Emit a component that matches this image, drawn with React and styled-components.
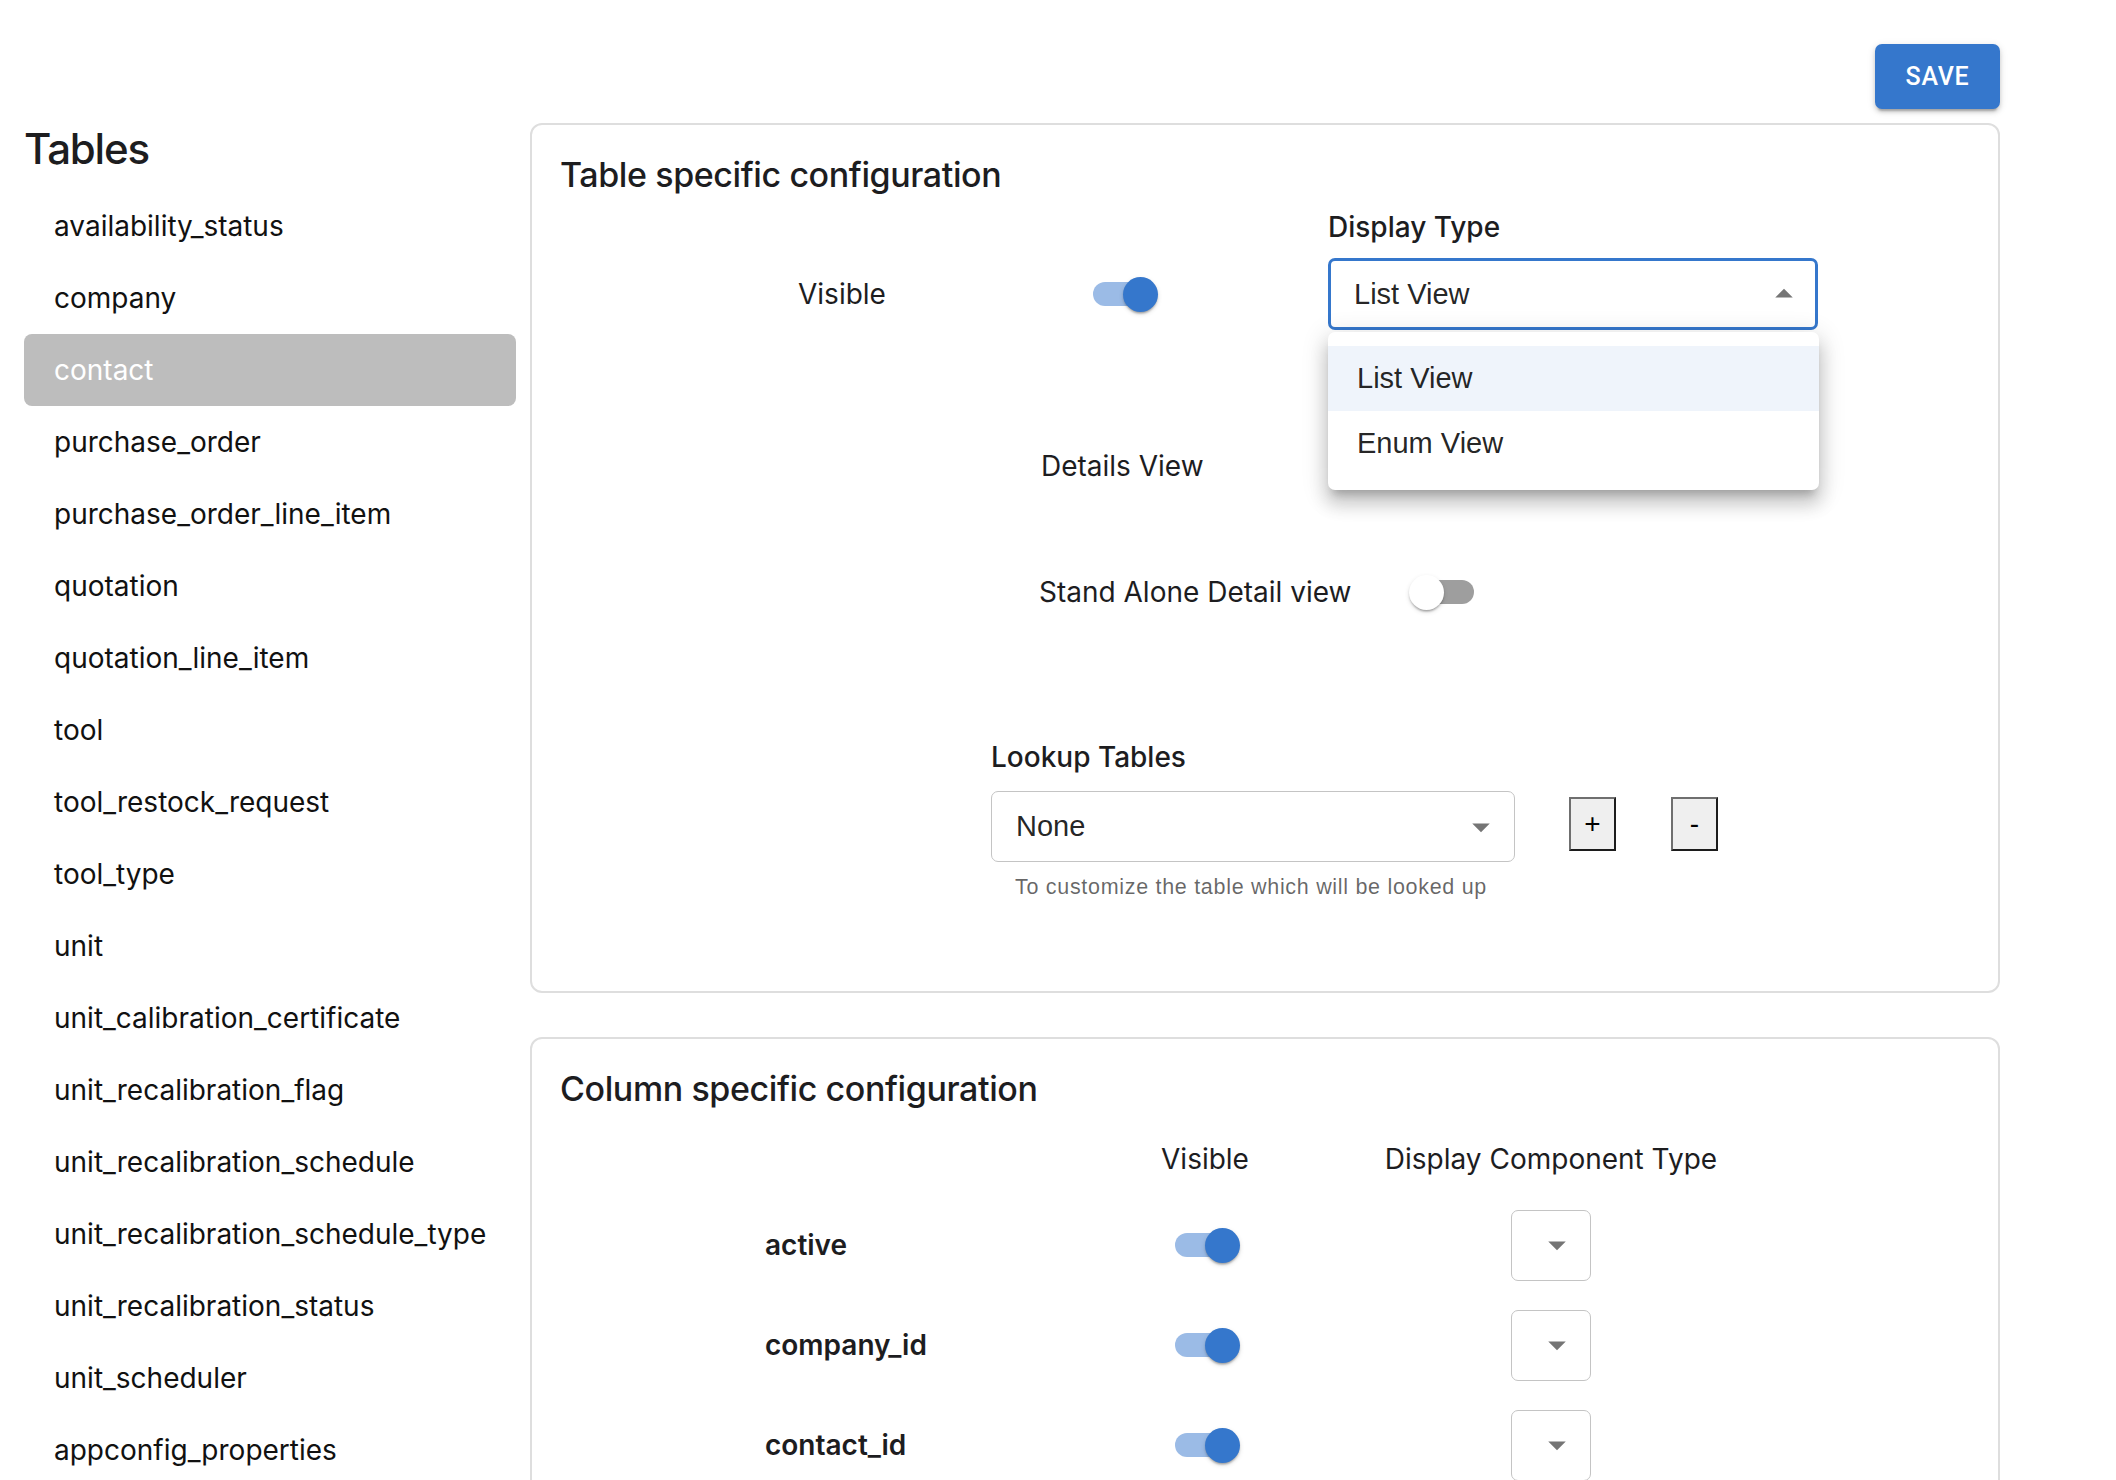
import React from 'react';
import styled, { createGlobalStyle } from 'styled-components';

const SYS = `Inter, "Noto Sans", sans-serif`;
const MUI = `"Liberation Sans", Arial, sans-serif`;
const PRIMARY = '#3577cc';

const GlobalStyle = createGlobalStyle`
  html, body {
    margin: 0;
    padding: 0;
    background: #ffffff;
  }
  body {
    font-family: ${SYS};
    color: #1d1d1f;
  }
`;

const Page = styled.div`
  display: grid;
  grid-template-columns: 492px 1470px;
  column-gap: 14px;
  padding-left: 24px;
  min-height: 1480px;
  box-sizing: border-box;
`;

const Sidebar = styled.aside`
  display: flex;
  flex-direction: column;
  padding-top: 124px;
`;

const SidebarTitle = styled.h2`
  margin: 0 0 16px;
  font-family: ${SYS};
  font-size: 42px;
  font-weight: 500;
  line-height: 1.2;
  letter-spacing: -1.2px;
  color: #1d1d1f;
`;

const TableList = styled.ul`
  list-style: none;
  margin: 0;
  padding: 0;
`;

const TableItem = styled.li`
  display: flex;
  align-items: center;
  height: 72px;
  padding-left: 30px;
  border-radius: 8px;
  font-size: 28px;
  color: ${p => (p.$selected ? '#ffffff' : '#111111')};
  background: ${p => (p.$selected ? '#bdbdbd' : 'transparent')};
`;

const Main = styled.main`
  display: flex;
  flex-direction: column;
`;

const SaveBar = styled.div`
  display: flex;
  justify-content: flex-end;
  padding-top: 44px;
  margin-bottom: 14px;
`;

const SaveButton = styled.button`
  width: 125px;
  height: 65px;
  border: none;
  border-radius: 7px;
  background: ${PRIMARY};
  color: #ffffff;
  font-family: Roboto, ${MUI};
  font-size: 25px;
  font-weight: 500;
  letter-spacing: 0.7px;
  box-shadow: 0 5px 2px -3px rgba(0, 0, 0, 0.2), 0 3px 4px 0 rgba(0, 0, 0, 0.14),
    0 2px 9px 0 rgba(0, 0, 0, 0.12);
`;

const Card = styled.section`
  border: 2px solid #dedede;
  border-radius: 12px;
  padding: 29px 28px ${p => p.$bottom}px;
  margin-bottom: 44px;
`;

const CardTitle = styled.h3`
  margin: 0;
  font-family: ${SYS};
  font-size: 34px;
  font-weight: 500;
  line-height: 42px;
  letter-spacing: -0.4px;
  color: #1d1d1f;
`;

const FieldRow = styled.div`
  display: flex;
  align-items: ${p => (p.$alignEnd ? 'flex-end' : 'center')};
  padding-left: ${p => p.$indent}px;
  margin-top: ${p => p.$top}px;
  min-height: 72px;
`;

const InlineGroup = styled.div`
  display: flex;
  align-items: center;
  height: 72px;
`;

const FieldLabel = styled.span`
  display: inline-block;
  width: ${p => p.$width}px;
  font-size: 28px;
  line-height: 34px;
  color: #1d1d1f;
`;

const FieldColumn = styled.div`
  position: relative;
  display: flex;
  flex-direction: column;
  margin-left: ${p => p.$gap || 0}px;
`;

const ColumnLabel = styled.span`
  font-size: 28px;
  font-weight: 500;
  line-height: 34px;
  margin-bottom: ${p => p.$space}px;
  color: #1d1d1f;
`;

const SelectBox = styled.div`
  position: relative;
  box-sizing: border-box;
  display: flex;
  align-items: center;
  width: ${p => p.$width}px;
  height: ${p => p.$height}px;
  padding-left: ${p => (p.$focused ? 23 : 24)}px;
  border: ${p => (p.$focused ? `3.5px solid ${PRIMARY}` : '1.75px solid #c4c4c4')};
  border-radius: 7px;
  background: #ffffff;
  font-family: ${MUI};
  font-size: 29px;
  color: rgba(0, 0, 0, 0.87);
`;

const SelectIcon = styled.svg`
  position: absolute;
  right: ${p => (p.$focused ? 10 : 12)}px;
  top: 50%;
  width: 42px;
  height: 42px;
  margin-top: -21px;
  fill: #757575;
  transform: ${p => (p.$open ? 'rotate(180deg)' : 'none')};
`;

const Menu = styled.ul`
  position: absolute;
  top: calc(100% + 2px);
  left: 0;
  z-index: 10;
  width: 491px;
  margin: 0;
  padding: 14px 0;
  list-style: none;
  background: #ffffff;
  border-radius: 7px;
  box-shadow: 0 9px 9px -5px rgba(0, 0, 0, 0.2), 0 14px 17px 2px rgba(0, 0, 0, 0.14),
    0 5px 24px 4px rgba(0, 0, 0, 0.12);
`;

const MenuItem = styled.li`
  display: flex;
  align-items: center;
  height: 65px;
  padding-left: 29px;
  font-family: ${MUI};
  font-size: 29px;
  color: rgba(0, 0, 0, 0.87);
  background: ${p => (p.$active ? 'rgba(53, 119, 204, 0.08)' : 'transparent')};
`;

const SwitchRoot = styled.span`
  position: relative;
  display: inline-block;
  width: 70px;
  height: 35px;
  flex-shrink: 0;
`;

const SwitchTrack = styled.span`
  display: block;
  margin: 5.25px;
  height: 24.5px;
  border-radius: 12.25px;
  background: ${p => (p.$on ? '#9bbbe6' : '#9e9e9e')};
`;

const SwitchThumb = styled.span`
  position: absolute;
  top: 0;
  left: ${p => (p.$on ? 35 : 0)}px;
  width: 35px;
  height: 35px;
  border-radius: 50%;
  background: ${p => (p.$on ? PRIMARY : '#ffffff')};
  box-shadow: 0 3px 2px -2px rgba(0, 0, 0, 0.2), 0 2px 2px 0 rgba(0, 0, 0, 0.14),
    0 2px 5px 0 rgba(0, 0, 0, 0.12);
`;

const LookupLine = styled.div`
  display: flex;
  align-items: center;
`;

const StepButton = styled.button`
  width: 47px;
  height: 54px;
  margin-left: ${p => p.$gap}px;
  margin-bottom: 6px;
  padding: 0;
  background: #efefef;
  border-style: solid;
  border-width: 2px;
  border-color: #6f6f6f #1c1c1c #1c1c1c #6f6f6f;
  font-family: ${MUI};
  font-size: 28px;
  color: #000000;
`;

const HelperText = styled.p`
  margin: 14px 0 0 24px;
  font-family: ${MUI};
  font-size: 21.5px;
  line-height: 22px;
  letter-spacing: 0.7px;
  color: rgba(0, 0, 0, 0.6);
`;

const ColumnGrid = styled.div`
  display: grid;
  grid-template-columns: 385px 110px 582px;
  grid-template-rows: 72px;
  grid-auto-rows: 100px;
  padding-left: 205px;
  margin-top: 13px;
  align-items: center;
  justify-items: center;
`;

const HeaderCell = styled.div`
  font-size: 28px;
  color: #1d1d1f;
`;

const ColumnName = styled.div`
  justify-self: start;
  font-size: 28px;
  font-weight: 600;
  color: #1d1d1f;
`;

const tables = [
  'availability_status',
  'company',
  'contact',
  'purchase_order',
  'purchase_order_line_item',
  'quotation',
  'quotation_line_item',
  'tool',
  'tool_restock_request',
  'tool_type',
  'unit',
  'unit_calibration_certificate',
  'unit_recalibration_flag',
  'unit_recalibration_schedule',
  'unit_recalibration_schedule_type',
  'unit_recalibration_status',
  'unit_scheduler',
  'appconfig_properties',
];

const columns = ['active', 'company_id', 'contact_id'];

function Switch({ on }) {
  return (
    <SwitchRoot>
      <SwitchTrack $on={on} />
      <SwitchThumb $on={on} />
    </SwitchRoot>
  );
}

function Select({ value, width, height, focused, open }) {
  return (
    <SelectBox $width={width} $height={height} $focused={focused}>
      {value}
      <SelectIcon viewBox="0 0 24 24" $open={open} $focused={focused}>
        <path d="M7 10l5 5 5-5z" />
      </SelectIcon>
    </SelectBox>
  );
}

export default function App() {
  return (
    <>
      <GlobalStyle />
      <Page>
        <Sidebar>
          <SidebarTitle>Tables</SidebarTitle>
          <TableList>
            {tables.map(name => (
              <TableItem key={name} $selected={name === 'contact'}>
                {name}
              </TableItem>
            ))}
          </TableList>
        </Sidebar>

        <Main>
          <SaveBar>
            <SaveButton>SAVE</SaveButton>
          </SaveBar>

          <Card $bottom={93}>
            <CardTitle>Table specific configuration</CardTitle>

            <FieldRow $indent={238} $top={14} $alignEnd>
              <InlineGroup>
                <FieldLabel $width={290}>Visible</FieldLabel>
                <Switch on />
              </InlineGroup>
              <FieldColumn $gap={170}>
                <ColumnLabel $space={14}>Display Type</ColumnLabel>
                <Select value="List View" width={490} height={72} focused open />
                <Menu>
                  <MenuItem $active>List View</MenuItem>
                  <MenuItem>Enum View</MenuItem>
                </Menu>
              </FieldColumn>
            </FieldRow>

            <FieldRow $indent={481} $top={100}>
              <FieldLabel $width={368}>Details View</FieldLabel>
              <Switch on />
            </FieldRow>

            <FieldRow $indent={479} $top={54}>
              <FieldLabel $width={370}>Stand Alone Detail view</FieldLabel>
              <Switch />
            </FieldRow>

            <FieldRow $indent={431} $top={112} $alignEnd>
              <FieldColumn>
                <ColumnLabel $space={17}>Lookup Tables</ColumnLabel>
                <LookupLine>
                  <Select value="None" width={524} height={71} />
                  <StepButton $gap={54}>+</StepButton>
                  <StepButton $gap={55}>-</StepButton>
                </LookupLine>
                <HelperText>To customize the table which will be looked up</HelperText>
              </FieldColumn>
            </FieldRow>
          </Card>

          <Card $bottom={40}>
            <CardTitle>Column specific configuration</CardTitle>
            <ColumnGrid>
              <span />
              <HeaderCell>Visible</HeaderCell>
              <HeaderCell>Display Component Type</HeaderCell>
              {columns.map(col => (
                <React.Fragment key={col}>
                  <ColumnName>{col}</ColumnName>
                  <Switch on />
                  <Select value="" width={80} height={71} />
                </React.Fragment>
              ))}
            </ColumnGrid>
          </Card>
        </Main>
      </Page>
    </>
  );
}
